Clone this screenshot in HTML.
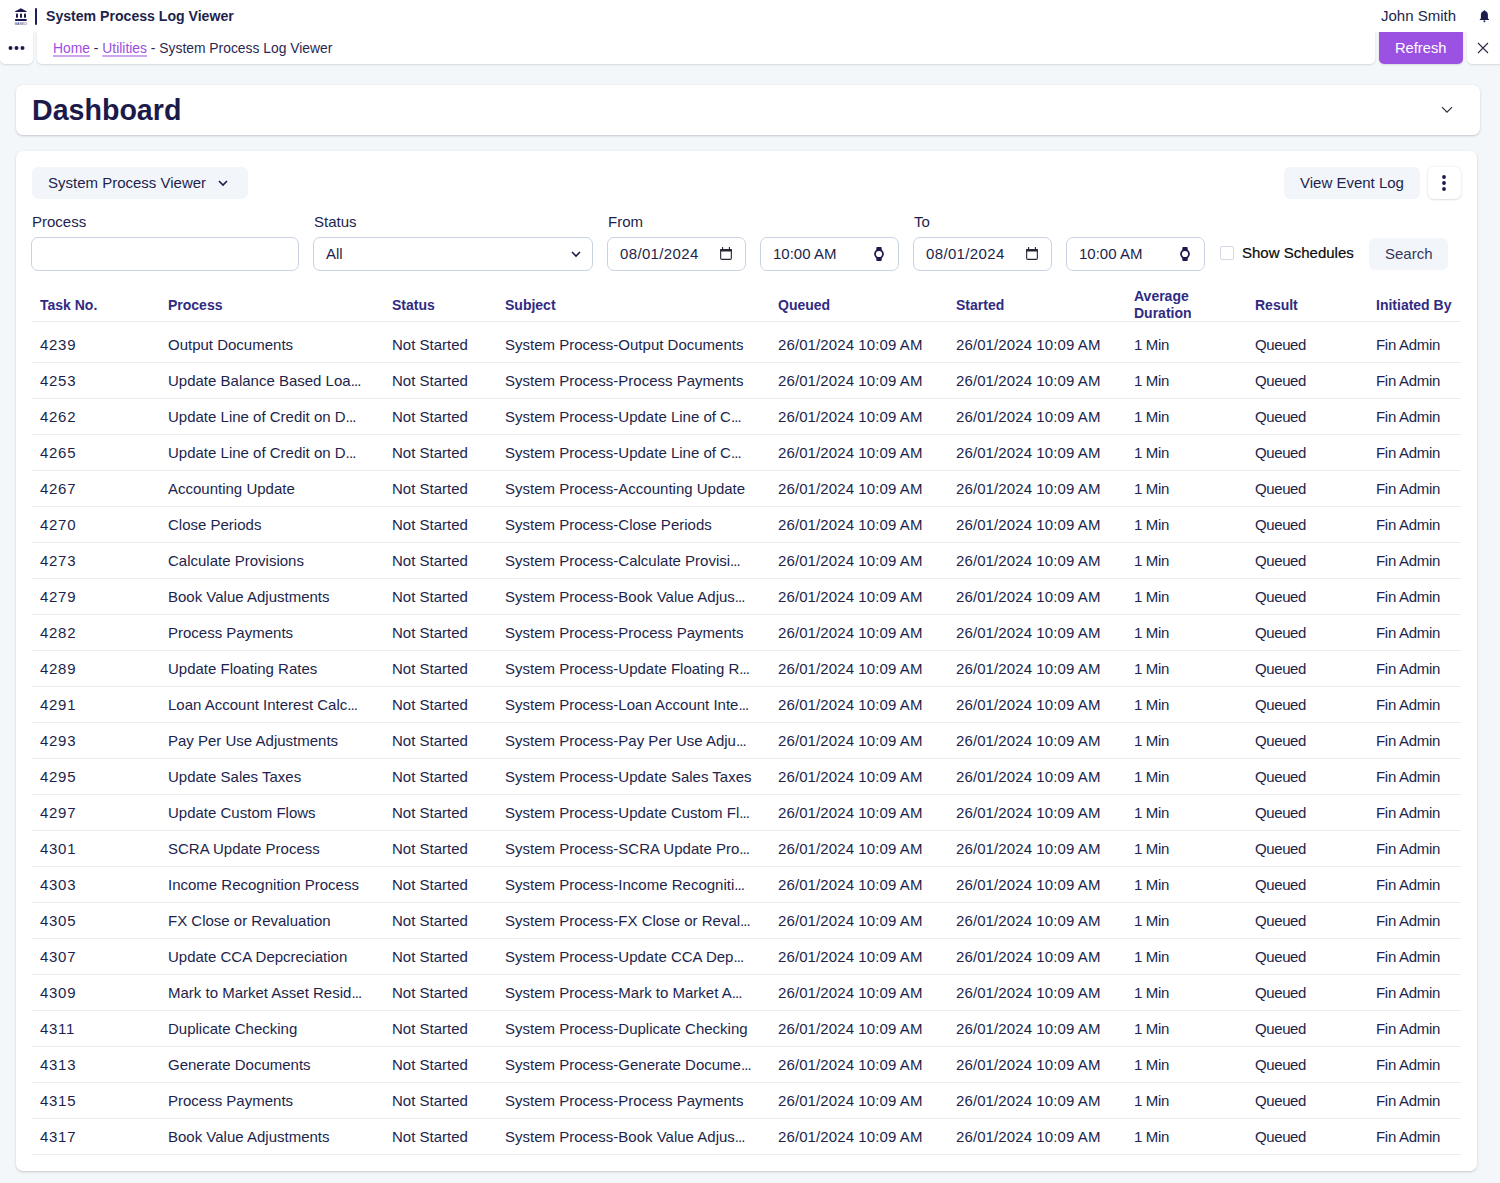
<!DOCTYPE html>
<html><head><meta charset="utf-8">
<style>
*{box-sizing:border-box;margin:0;padding:0}
html,body{width:1500px;height:1183px;overflow:hidden}
body{position:relative;background:#f4f7fa;font-family:"Liberation Sans",sans-serif;color:#221f4c;font-size:15px}
.abs{position:absolute}
.topbar{position:absolute;left:0;top:0;width:1500px;height:32px;background:#fff}
.card{position:absolute;background:#fff;border-radius:7px;box-shadow:0 1px 2px rgba(20,25,45,.16),0 1px 4px rgba(20,25,45,.05)}
.bc{position:absolute;background:#fff;border-radius:0 0 5px 5px;box-shadow:0 1px 2px rgba(20,25,45,.14)}
.txt{position:absolute;white-space:nowrap}
.btn{position:absolute;background:#f2f6fa;border-radius:6px}
.inp{position:absolute;height:34px;border:1px solid #c9d2e2;border-radius:7px;background:#fff}
.lbl{position:absolute;white-space:nowrap;font-size:15px;line-height:20px}
.thead .th,.thead .th2{position:absolute;font-weight:700;font-size:14px;color:#302b82;white-space:nowrap}
.th{top:295px;line-height:20px}
.th2{top:288px;line-height:17px}
.hline{position:absolute;left:32px;width:1429px;top:321px;height:1px;background:#eaecf0}
.tr{position:absolute;left:32px;width:1429px;height:36px;border-bottom:1px solid #eaecf0}
.tr span{position:absolute;top:0;line-height:35px;white-space:nowrap;margin-left:-32px}
a{color:#9b4de0}
.tr i{font-style:normal;letter-spacing:-0.9px}
</style></head><body>
<div class="topbar"></div>
<!-- logo -->
<svg class="abs" style="left:13px;top:7px" width="16" height="19" viewBox="0 0 16 19">
<path d="M7.9 1.2 L13.6 4.3 Q14 4.9 13.4 5.1 L2.4 5.1 Q1.8 4.9 2.2 4.3 Z" fill="#1c1a4a"/>
<rect x="3" y="6.4" width="2" height="4.5" rx="0.8" fill="#1c1a4a"/>
<rect x="7" y="6.4" width="2" height="4.5" rx="0.8" fill="#1c1a4a"/>
<rect x="11" y="6.4" width="2" height="4.5" rx="0.8" fill="#1c1a4a"/>
<rect x="2" y="12.1" width="11.8" height="1.8" rx="0.6" fill="#1c1a4a"/>
<text x="7.9" y="17.8" font-size="3.6" font-weight="400" text-anchor="middle" fill="#3a3868" font-family="Liberation Sans" textLength="12.5" lengthAdjust="spacingAndGlyphs">BANKO</text>
</svg>
<div class="abs" style="left:35.2px;top:7.8px;width:2px;height:17px;background:#221f50;border-radius:1px"></div>
<div class="txt" style="left:46px;top:6px;line-height:20px;font-size:14.1px;font-weight:700">System Process Log Viewer</div>
<div class="txt" style="left:1381px;top:6px;line-height:20px;font-size:15px">John Smith</div>
<svg class="abs" style="left:1479px;top:9px" width="11" height="14" viewBox="0 0 11 14">
<path d="M5.4 1 L6.3 2.1 Q8.9 2.9 8.9 5.6 L8.9 9.5 L10 10.2 L10 10.9 L0.8 10.9 L0.8 10.2 L1.9 9.5 L1.9 5.6 Q1.9 2.9 4.5 2.1 Z" fill="#1e1b4d"/>
<circle cx="5.4" cy="12.3" r="0.95" fill="#1e1b4d"/>
</svg>

<!-- breadcrumb row -->
<div class="bc" style="left:0;top:32px;width:33px;height:32px"></div>
<svg class="abs" style="left:8px;top:44px" width="17" height="8" viewBox="0 0 17 8">
<circle cx="2.5" cy="4" r="2" fill="#1c1a4a"/><circle cx="8.5" cy="4" r="2" fill="#1c1a4a"/><circle cx="14.5" cy="4" r="2" fill="#1c1a4a"/>
</svg>
<div class="bc" style="left:37px;top:32px;width:1338px;height:32px"></div>
<div class="txt" style="left:53px;top:38px;line-height:20px;font-size:13.86px;color:#2a2850"><span style="color:#9b4de0;text-decoration:underline;text-decoration-color:#cda6f2;text-underline-offset:2px;text-decoration-thickness:2px">Home</span> - <span style="color:#9b4de0;text-decoration:underline;text-decoration-color:#cda6f2;text-underline-offset:2px;text-decoration-thickness:2px">Utilities</span> - System Process Log Viewer</div>
<div class="abs" style="left:1379px;top:32px;width:84px;height:32px;background:#9b52e2;border-radius:0 0 5px 5px;box-shadow:0 1px 2px rgba(20,25,45,.14)"></div>
<div class="txt" style="left:1395px;top:38px;line-height:20px;font-size:14.7px;color:#fff;font-weight:400">Refresh</div>
<div class="bc" style="left:1467px;top:32px;width:33px;height:32px;border-radius:0 0 0 5px"></div>
<svg class="abs" style="left:1477px;top:42px" width="12" height="12" viewBox="0 0 12 12">
<path d="M1 1 L11 11 M11 1 L1 11" stroke="#2a2850" stroke-width="1.1"/>
</svg>

<!-- Dashboard card -->
<div class="card" style="left:16px;top:85px;width:1464px;height:50px"></div>
<div class="txt" style="left:32px;top:92px;line-height:36px;font-size:28.6px;font-weight:700;color:#1c1a4a">Dashboard</div>
<svg class="abs" style="left:1441px;top:106px" width="12" height="8" viewBox="0 0 12 8">
<path d="M1 1.2 L6 6.2 L11 1.2" stroke="#2a2a3a" stroke-width="1.2" fill="none"/>
</svg>

<!-- main card -->
<div class="card" style="left:16px;top:151px;width:1461px;height:1020px"></div>
<div class="btn" style="left:32px;top:167px;width:216px;height:32px"></div>
<div class="txt" style="left:48px;top:173px;line-height:20px">System Process Viewer</div>
<svg class="abs" style="left:218.3px;top:179.8px" width="10" height="7" viewBox="0 0 10 7">
<path d="M1 1 L5 5 L9 1" stroke="#1c1a4a" stroke-width="1.6" fill="none"/>
</svg>
<div class="btn" style="left:1284px;top:167px;width:136px;height:32px"></div>
<div class="txt" style="left:1300px;top:173px;line-height:20px">View Event Log</div>
<div class="abs" style="left:1428px;top:167px;width:33px;height:32px;background:#fff;border-radius:6px;box-shadow:0 0 3px rgba(30,40,80,.10),0 1px 2px rgba(30,40,80,.10)"></div>
<svg class="abs" style="left:1440.4px;top:174px" width="8" height="18" viewBox="0 0 8 18">
<circle cx="4" cy="3" r="1.9" fill="#1c1a4a"/><circle cx="4" cy="9" r="1.9" fill="#1c1a4a"/><circle cx="4" cy="15" r="1.9" fill="#1c1a4a"/>
</svg>

<!-- labels -->
<div class="lbl" style="left:32px;top:212px">Process</div>
<div class="lbl" style="left:314px;top:212px">Status</div>
<div class="lbl" style="left:608px;top:212px">From</div>
<div class="lbl" style="left:914px;top:212px">To</div>

<!-- inputs -->
<div class="inp" style="left:31px;top:237px;width:268px"></div>
<div class="inp" style="left:313px;top:237px;width:280px"></div>
<div class="txt" style="left:326px;top:244px;line-height:20px">All</div>
<svg class="abs" style="left:570.8px;top:250.9px" width="10" height="7" viewBox="0 0 10 7">
<path d="M1 1 L5 5 L9 1" stroke="#1c1a4a" stroke-width="1.6" fill="none"/>
</svg>

<div class="inp" style="left:607px;top:237px;width:139px"></div>
<div class="txt" style="left:620px;top:244px;line-height:20px;letter-spacing:0.35px">08/01/2024</div>
<svg class="abs" style="left:714px;top:242px" width="24" height="24" viewBox="0 0 24 24">
<rect x="6.65" y="7.5" width="10.7" height="9.9" rx="1.2" stroke="#262637" stroke-width="1.1" fill="none"/>
<rect x="6.1" y="7" width="11.8" height="2.6" rx="0.6" fill="#262637"/>
<rect x="8" y="5" width="1.1" height="2.6" fill="#262637"/><rect x="14.9" y="5" width="1.1" height="2.6" fill="#262637"/>
</svg>
<div class="inp" style="left:760px;top:237px;width:139px"></div>
<div class="txt" style="left:773px;top:244px;line-height:20px">10:00 AM</div>
<svg class="abs" style="left:867px;top:242px" width="24" height="24" viewBox="0 0 24 24">
<path d="M9.6 5 H14.4 L14.9 8.4 H9.1 Z" fill="#1c1a4a"/>
<path d="M9.1 15.6 H14.9 L14.4 19 H9.6 Z" fill="#1c1a4a"/>
<circle cx="12" cy="12" r="3.95" stroke="#1c1a4a" stroke-width="1.75" fill="#fff"/>
</svg>

<div class="inp" style="left:913px;top:237px;width:139px"></div>
<div class="txt" style="left:926px;top:244px;line-height:20px;letter-spacing:0.35px">08/01/2024</div>
<svg class="abs" style="left:1020px;top:242px" width="24" height="24" viewBox="0 0 24 24">
<rect x="6.65" y="7.5" width="10.7" height="9.9" rx="1.2" stroke="#262637" stroke-width="1.1" fill="none"/>
<rect x="6.1" y="7" width="11.8" height="2.6" rx="0.6" fill="#262637"/>
<rect x="8" y="5" width="1.1" height="2.6" fill="#262637"/><rect x="14.9" y="5" width="1.1" height="2.6" fill="#262637"/>
</svg>
<div class="inp" style="left:1066px;top:237px;width:139px"></div>
<div class="txt" style="left:1079px;top:244px;line-height:20px">10:00 AM</div>
<svg class="abs" style="left:1173px;top:242px" width="24" height="24" viewBox="0 0 24 24">
<path d="M9.6 5 H14.4 L14.9 8.4 H9.1 Z" fill="#1c1a4a"/>
<path d="M9.1 15.6 H14.9 L14.4 19 H9.6 Z" fill="#1c1a4a"/>
<circle cx="12" cy="12" r="3.95" stroke="#1c1a4a" stroke-width="1.75" fill="#fff"/>
</svg>

<div class="abs" style="left:1220px;top:246px;width:14px;height:14px;border:1px solid #d5dbe6;border-radius:2px;background:#fff"></div>
<div class="txt" style="left:1242px;top:243px;line-height:20px;color:#0a0a0a;-webkit-text-stroke:0.2px #0a0a0a">Show Schedules</div>
<div class="btn" style="left:1369px;top:238px;width:79px;height:32px"></div>
<div class="txt" style="left:1385px;top:244px;line-height:20px;color:#38365a">Search</div>

<div class="hline"></div>

<div class="thead">
<div class="th" style="left:40px">Task No.</div>
<div class="th" style="left:168px">Process</div>
<div class="th" style="left:392px">Status</div>
<div class="th" style="left:505px">Subject</div>
<div class="th" style="left:778px">Queued</div>
<div class="th" style="left:956px">Started</div>
<div class="th2" style="left:1134px">Average<br>Duration</div>
<div class="th" style="left:1255px">Result</div>
<div class="th" style="left:1376px">Initiated By</div>
</div>
<div class="tr" style="top:327px">
<span style="left:40px;letter-spacing:0.7px">4239</span>
<span style="left:168px">Output Documents</span>
<span style="left:392px">Not Started</span>
<span style="left:505px">System Process-Output Documents</span>
<span style="left:778px;letter-spacing:0.1px">26/01/2024 10:09 AM</span>
<span style="left:956px;letter-spacing:0.1px">26/01/2024 10:09 AM</span>
<span style="left:1134px;letter-spacing:-0.35px">1 Min</span>
<span style="left:1255px;letter-spacing:-0.4px">Queued</span>
<span style="left:1376px;letter-spacing:-0.3px">Fin Admin</span>
</div>
<div class="tr" style="top:363px">
<span style="left:40px;letter-spacing:0.7px">4253</span>
<span style="left:168px">Update Balance Based Loa<i>...</i></span>
<span style="left:392px">Not Started</span>
<span style="left:505px">System Process-Process Payments</span>
<span style="left:778px;letter-spacing:0.1px">26/01/2024 10:09 AM</span>
<span style="left:956px;letter-spacing:0.1px">26/01/2024 10:09 AM</span>
<span style="left:1134px;letter-spacing:-0.35px">1 Min</span>
<span style="left:1255px;letter-spacing:-0.4px">Queued</span>
<span style="left:1376px;letter-spacing:-0.3px">Fin Admin</span>
</div>
<div class="tr" style="top:399px">
<span style="left:40px;letter-spacing:0.7px">4262</span>
<span style="left:168px">Update Line of Credit on D<i>...</i></span>
<span style="left:392px">Not Started</span>
<span style="left:505px">System Process-Update Line of C<i>...</i></span>
<span style="left:778px;letter-spacing:0.1px">26/01/2024 10:09 AM</span>
<span style="left:956px;letter-spacing:0.1px">26/01/2024 10:09 AM</span>
<span style="left:1134px;letter-spacing:-0.35px">1 Min</span>
<span style="left:1255px;letter-spacing:-0.4px">Queued</span>
<span style="left:1376px;letter-spacing:-0.3px">Fin Admin</span>
</div>
<div class="tr" style="top:435px">
<span style="left:40px;letter-spacing:0.7px">4265</span>
<span style="left:168px">Update Line of Credit on D<i>...</i></span>
<span style="left:392px">Not Started</span>
<span style="left:505px">System Process-Update Line of C<i>...</i></span>
<span style="left:778px;letter-spacing:0.1px">26/01/2024 10:09 AM</span>
<span style="left:956px;letter-spacing:0.1px">26/01/2024 10:09 AM</span>
<span style="left:1134px;letter-spacing:-0.35px">1 Min</span>
<span style="left:1255px;letter-spacing:-0.4px">Queued</span>
<span style="left:1376px;letter-spacing:-0.3px">Fin Admin</span>
</div>
<div class="tr" style="top:471px">
<span style="left:40px;letter-spacing:0.7px">4267</span>
<span style="left:168px">Accounting Update</span>
<span style="left:392px">Not Started</span>
<span style="left:505px">System Process-Accounting Update</span>
<span style="left:778px;letter-spacing:0.1px">26/01/2024 10:09 AM</span>
<span style="left:956px;letter-spacing:0.1px">26/01/2024 10:09 AM</span>
<span style="left:1134px;letter-spacing:-0.35px">1 Min</span>
<span style="left:1255px;letter-spacing:-0.4px">Queued</span>
<span style="left:1376px;letter-spacing:-0.3px">Fin Admin</span>
</div>
<div class="tr" style="top:507px">
<span style="left:40px;letter-spacing:0.7px">4270</span>
<span style="left:168px">Close Periods</span>
<span style="left:392px">Not Started</span>
<span style="left:505px">System Process-Close Periods</span>
<span style="left:778px;letter-spacing:0.1px">26/01/2024 10:09 AM</span>
<span style="left:956px;letter-spacing:0.1px">26/01/2024 10:09 AM</span>
<span style="left:1134px;letter-spacing:-0.35px">1 Min</span>
<span style="left:1255px;letter-spacing:-0.4px">Queued</span>
<span style="left:1376px;letter-spacing:-0.3px">Fin Admin</span>
</div>
<div class="tr" style="top:543px">
<span style="left:40px;letter-spacing:0.7px">4273</span>
<span style="left:168px">Calculate Provisions</span>
<span style="left:392px">Not Started</span>
<span style="left:505px">System Process-Calculate Provisi<i>...</i></span>
<span style="left:778px;letter-spacing:0.1px">26/01/2024 10:09 AM</span>
<span style="left:956px;letter-spacing:0.1px">26/01/2024 10:09 AM</span>
<span style="left:1134px;letter-spacing:-0.35px">1 Min</span>
<span style="left:1255px;letter-spacing:-0.4px">Queued</span>
<span style="left:1376px;letter-spacing:-0.3px">Fin Admin</span>
</div>
<div class="tr" style="top:579px">
<span style="left:40px;letter-spacing:0.7px">4279</span>
<span style="left:168px">Book Value Adjustments</span>
<span style="left:392px">Not Started</span>
<span style="left:505px">System Process-Book Value Adjus<i>...</i></span>
<span style="left:778px;letter-spacing:0.1px">26/01/2024 10:09 AM</span>
<span style="left:956px;letter-spacing:0.1px">26/01/2024 10:09 AM</span>
<span style="left:1134px;letter-spacing:-0.35px">1 Min</span>
<span style="left:1255px;letter-spacing:-0.4px">Queued</span>
<span style="left:1376px;letter-spacing:-0.3px">Fin Admin</span>
</div>
<div class="tr" style="top:615px">
<span style="left:40px;letter-spacing:0.7px">4282</span>
<span style="left:168px">Process Payments</span>
<span style="left:392px">Not Started</span>
<span style="left:505px">System Process-Process Payments</span>
<span style="left:778px;letter-spacing:0.1px">26/01/2024 10:09 AM</span>
<span style="left:956px;letter-spacing:0.1px">26/01/2024 10:09 AM</span>
<span style="left:1134px;letter-spacing:-0.35px">1 Min</span>
<span style="left:1255px;letter-spacing:-0.4px">Queued</span>
<span style="left:1376px;letter-spacing:-0.3px">Fin Admin</span>
</div>
<div class="tr" style="top:651px">
<span style="left:40px;letter-spacing:0.7px">4289</span>
<span style="left:168px">Update Floating Rates</span>
<span style="left:392px">Not Started</span>
<span style="left:505px">System Process-Update Floating R<i>...</i></span>
<span style="left:778px;letter-spacing:0.1px">26/01/2024 10:09 AM</span>
<span style="left:956px;letter-spacing:0.1px">26/01/2024 10:09 AM</span>
<span style="left:1134px;letter-spacing:-0.35px">1 Min</span>
<span style="left:1255px;letter-spacing:-0.4px">Queued</span>
<span style="left:1376px;letter-spacing:-0.3px">Fin Admin</span>
</div>
<div class="tr" style="top:687px">
<span style="left:40px;letter-spacing:0.7px">4291</span>
<span style="left:168px">Loan Account Interest Calc<i>...</i></span>
<span style="left:392px">Not Started</span>
<span style="left:505px">System Process-Loan Account Inte<i>...</i></span>
<span style="left:778px;letter-spacing:0.1px">26/01/2024 10:09 AM</span>
<span style="left:956px;letter-spacing:0.1px">26/01/2024 10:09 AM</span>
<span style="left:1134px;letter-spacing:-0.35px">1 Min</span>
<span style="left:1255px;letter-spacing:-0.4px">Queued</span>
<span style="left:1376px;letter-spacing:-0.3px">Fin Admin</span>
</div>
<div class="tr" style="top:723px">
<span style="left:40px;letter-spacing:0.7px">4293</span>
<span style="left:168px">Pay Per Use Adjustments</span>
<span style="left:392px">Not Started</span>
<span style="left:505px">System Process-Pay Per Use Adju<i>...</i></span>
<span style="left:778px;letter-spacing:0.1px">26/01/2024 10:09 AM</span>
<span style="left:956px;letter-spacing:0.1px">26/01/2024 10:09 AM</span>
<span style="left:1134px;letter-spacing:-0.35px">1 Min</span>
<span style="left:1255px;letter-spacing:-0.4px">Queued</span>
<span style="left:1376px;letter-spacing:-0.3px">Fin Admin</span>
</div>
<div class="tr" style="top:759px">
<span style="left:40px;letter-spacing:0.7px">4295</span>
<span style="left:168px">Update Sales Taxes</span>
<span style="left:392px">Not Started</span>
<span style="left:505px">System Process-Update Sales Taxes</span>
<span style="left:778px;letter-spacing:0.1px">26/01/2024 10:09 AM</span>
<span style="left:956px;letter-spacing:0.1px">26/01/2024 10:09 AM</span>
<span style="left:1134px;letter-spacing:-0.35px">1 Min</span>
<span style="left:1255px;letter-spacing:-0.4px">Queued</span>
<span style="left:1376px;letter-spacing:-0.3px">Fin Admin</span>
</div>
<div class="tr" style="top:795px">
<span style="left:40px;letter-spacing:0.7px">4297</span>
<span style="left:168px">Update Custom Flows</span>
<span style="left:392px">Not Started</span>
<span style="left:505px">System Process-Update Custom Fl<i>...</i></span>
<span style="left:778px;letter-spacing:0.1px">26/01/2024 10:09 AM</span>
<span style="left:956px;letter-spacing:0.1px">26/01/2024 10:09 AM</span>
<span style="left:1134px;letter-spacing:-0.35px">1 Min</span>
<span style="left:1255px;letter-spacing:-0.4px">Queued</span>
<span style="left:1376px;letter-spacing:-0.3px">Fin Admin</span>
</div>
<div class="tr" style="top:831px">
<span style="left:40px;letter-spacing:0.7px">4301</span>
<span style="left:168px">SCRA Update Process</span>
<span style="left:392px">Not Started</span>
<span style="left:505px">System Process-SCRA Update Pro<i>...</i></span>
<span style="left:778px;letter-spacing:0.1px">26/01/2024 10:09 AM</span>
<span style="left:956px;letter-spacing:0.1px">26/01/2024 10:09 AM</span>
<span style="left:1134px;letter-spacing:-0.35px">1 Min</span>
<span style="left:1255px;letter-spacing:-0.4px">Queued</span>
<span style="left:1376px;letter-spacing:-0.3px">Fin Admin</span>
</div>
<div class="tr" style="top:867px">
<span style="left:40px;letter-spacing:0.7px">4303</span>
<span style="left:168px">Income Recognition Process</span>
<span style="left:392px">Not Started</span>
<span style="left:505px">System Process-Income Recogniti<i>...</i></span>
<span style="left:778px;letter-spacing:0.1px">26/01/2024 10:09 AM</span>
<span style="left:956px;letter-spacing:0.1px">26/01/2024 10:09 AM</span>
<span style="left:1134px;letter-spacing:-0.35px">1 Min</span>
<span style="left:1255px;letter-spacing:-0.4px">Queued</span>
<span style="left:1376px;letter-spacing:-0.3px">Fin Admin</span>
</div>
<div class="tr" style="top:903px">
<span style="left:40px;letter-spacing:0.7px">4305</span>
<span style="left:168px">FX Close or Revaluation</span>
<span style="left:392px">Not Started</span>
<span style="left:505px">System Process-FX Close or Reval<i>...</i></span>
<span style="left:778px;letter-spacing:0.1px">26/01/2024 10:09 AM</span>
<span style="left:956px;letter-spacing:0.1px">26/01/2024 10:09 AM</span>
<span style="left:1134px;letter-spacing:-0.35px">1 Min</span>
<span style="left:1255px;letter-spacing:-0.4px">Queued</span>
<span style="left:1376px;letter-spacing:-0.3px">Fin Admin</span>
</div>
<div class="tr" style="top:939px">
<span style="left:40px;letter-spacing:0.7px">4307</span>
<span style="left:168px">Update CCA Depcreciation</span>
<span style="left:392px">Not Started</span>
<span style="left:505px">System Process-Update CCA Dep<i>...</i></span>
<span style="left:778px;letter-spacing:0.1px">26/01/2024 10:09 AM</span>
<span style="left:956px;letter-spacing:0.1px">26/01/2024 10:09 AM</span>
<span style="left:1134px;letter-spacing:-0.35px">1 Min</span>
<span style="left:1255px;letter-spacing:-0.4px">Queued</span>
<span style="left:1376px;letter-spacing:-0.3px">Fin Admin</span>
</div>
<div class="tr" style="top:975px">
<span style="left:40px;letter-spacing:0.7px">4309</span>
<span style="left:168px">Mark to Market Asset Resid<i>...</i></span>
<span style="left:392px">Not Started</span>
<span style="left:505px">System Process-Mark to Market A<i>...</i></span>
<span style="left:778px;letter-spacing:0.1px">26/01/2024 10:09 AM</span>
<span style="left:956px;letter-spacing:0.1px">26/01/2024 10:09 AM</span>
<span style="left:1134px;letter-spacing:-0.35px">1 Min</span>
<span style="left:1255px;letter-spacing:-0.4px">Queued</span>
<span style="left:1376px;letter-spacing:-0.3px">Fin Admin</span>
</div>
<div class="tr" style="top:1011px">
<span style="left:40px;letter-spacing:0.7px">4311</span>
<span style="left:168px">Duplicate Checking</span>
<span style="left:392px">Not Started</span>
<span style="left:505px">System Process-Duplicate Checking</span>
<span style="left:778px;letter-spacing:0.1px">26/01/2024 10:09 AM</span>
<span style="left:956px;letter-spacing:0.1px">26/01/2024 10:09 AM</span>
<span style="left:1134px;letter-spacing:-0.35px">1 Min</span>
<span style="left:1255px;letter-spacing:-0.4px">Queued</span>
<span style="left:1376px;letter-spacing:-0.3px">Fin Admin</span>
</div>
<div class="tr" style="top:1047px">
<span style="left:40px;letter-spacing:0.7px">4313</span>
<span style="left:168px">Generate Documents</span>
<span style="left:392px">Not Started</span>
<span style="left:505px">System Process-Generate Docume<i>...</i></span>
<span style="left:778px;letter-spacing:0.1px">26/01/2024 10:09 AM</span>
<span style="left:956px;letter-spacing:0.1px">26/01/2024 10:09 AM</span>
<span style="left:1134px;letter-spacing:-0.35px">1 Min</span>
<span style="left:1255px;letter-spacing:-0.4px">Queued</span>
<span style="left:1376px;letter-spacing:-0.3px">Fin Admin</span>
</div>
<div class="tr" style="top:1083px">
<span style="left:40px;letter-spacing:0.7px">4315</span>
<span style="left:168px">Process Payments</span>
<span style="left:392px">Not Started</span>
<span style="left:505px">System Process-Process Payments</span>
<span style="left:778px;letter-spacing:0.1px">26/01/2024 10:09 AM</span>
<span style="left:956px;letter-spacing:0.1px">26/01/2024 10:09 AM</span>
<span style="left:1134px;letter-spacing:-0.35px">1 Min</span>
<span style="left:1255px;letter-spacing:-0.4px">Queued</span>
<span style="left:1376px;letter-spacing:-0.3px">Fin Admin</span>
</div>
<div class="tr" style="top:1119px">
<span style="left:40px;letter-spacing:0.7px">4317</span>
<span style="left:168px">Book Value Adjustments</span>
<span style="left:392px">Not Started</span>
<span style="left:505px">System Process-Book Value Adjus<i>...</i></span>
<span style="left:778px;letter-spacing:0.1px">26/01/2024 10:09 AM</span>
<span style="left:956px;letter-spacing:0.1px">26/01/2024 10:09 AM</span>
<span style="left:1134px;letter-spacing:-0.35px">1 Min</span>
<span style="left:1255px;letter-spacing:-0.4px">Queued</span>
<span style="left:1376px;letter-spacing:-0.3px">Fin Admin</span>
</div>
</body></html>
